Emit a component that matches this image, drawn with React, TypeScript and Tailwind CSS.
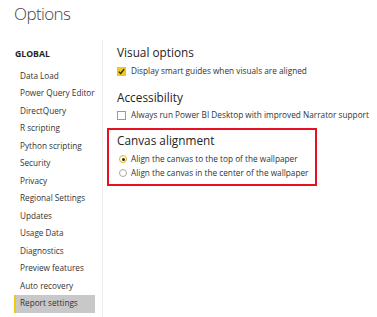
import React from "react";

const items = [
  "Data Load",
  "Power Query Editor",
  "DirectQuery",
  "R scripting",
  "Python scripting",
  "Security",
  "Privacy",
  "Regional Settings",
  "Updates",
  "Usage Data",
  "Diagnostics",
  "Preview features",
  "Auto recovery",
];

function Check({ checked }: { checked: boolean }) {
  if (checked) {
    return (
      <span className="w-[9px] h-[9px] bg-[#f2c811] flex items-center justify-center shrink-0">
        <svg width="7" height="7" viewBox="0 0 7 7">
          <path d="M0.8 3.6 L2.7 5.5 L6.2 1.2" stroke="#252423" strokeWidth="1.3" fill="none" />
        </svg>
      </span>
    );
  }
  return <span className="w-[9px] h-[9px] border border-[#9a9a9a] bg-white shrink-0" />;
}

function Radio({ checked }: { checked: boolean }) {
  if (checked) {
    return (
      <span className="w-[8px] h-[8px] rounded-full border border-[#e8b400] bg-white flex items-center justify-center shrink-0">
        <span className="w-[3px] h-[3px] rounded-full bg-[#252423]" />
      </span>
    );
  }
  return <span className="w-[8px] h-[8px] rounded-full border border-[#a8a8a8] bg-white shrink-0" />;
}

export default function App() {
  return (
    <div
      className="w-[377px] h-[317px] overflow-hidden bg-white text-[#333333] flex flex-col"
      style={{ fontFamily: '"Open Sans", "Noto Sans", sans-serif' }}
    >
      <div className="h-[40px] pl-[14px] pt-[2px] text-[17px] leading-[24px] font-light tracking-[-0.6px] text-[#444444]">
        Options
      </div>
      <div className="flex flex-1 min-h-0">
        <div className="w-[103px] shrink-0 border-r border-[#ececec] flex flex-col">
          <div className="pl-[15px] pt-[7px] h-[27px] text-[8.7px] leading-[14px] font-bold text-[#252423]">
            GLOBAL
          </div>
          {items.map((it) => (
            <div key={it} className="h-[17.5px] pl-[20px] flex items-center text-[8.2px] whitespace-nowrap">
              {it}
            </div>
          ))}
          <div className="h-[18px] ml-[14px] w-[81px] bg-[#c8c8c8] border-l-2 border-[#f2c811] pl-[4px] flex items-center text-[8.2px] whitespace-nowrap">
            Report settings
          </div>
        </div>
        <div className="flex-1 flex flex-col">
          <div className="pl-[14px] pt-[3px] h-[24px] text-[11.8px] leading-[18px] text-[#252423]">
            Visual options
          </div>
          <div className="pl-[14px] h-[14px] flex items-center gap-[5px] text-[8.25px] whitespace-nowrap">
            <Check checked={true} />
            <span>Display smart guides when visuals are aligned</span>
          </div>
          <div className="pl-[14px] pt-[10px] h-[30px] text-[11.8px] leading-[18px] text-[#252423]">
            Accessibility
          </div>
          <div className="pl-[14px] h-[14px] flex items-center gap-[5px] text-[8.25px] whitespace-nowrap">
            <Check checked={false} />
            <span>Always run Power BI Desktop with improved Narrator support</span>
          </div>
          <div className="ml-[4px] mt-[6px] w-[210px] h-[58px] border-2 border-[#e81123] pl-[8px] flex flex-col">
            <div className="pt-[1px] h-[22px] text-[11.8px] leading-[18px] text-[#252423]">Canvas alignment</div>
            <div className="h-[14px] flex items-center gap-[4px] text-[8.25px] whitespace-nowrap pl-[2px]">
              <Radio checked={true} />
              <span>Align the canvas to the top of the wallpaper</span>
            </div>
            <div className="h-[14px] flex items-center gap-[4px] text-[8.25px] whitespace-nowrap pl-[2px]">
              <Radio checked={false} />
              <span>Align the canvas in the center of the wallpaper</span>
            </div>
          </div>
        </div>
      </div>
    </div>
  );
}
